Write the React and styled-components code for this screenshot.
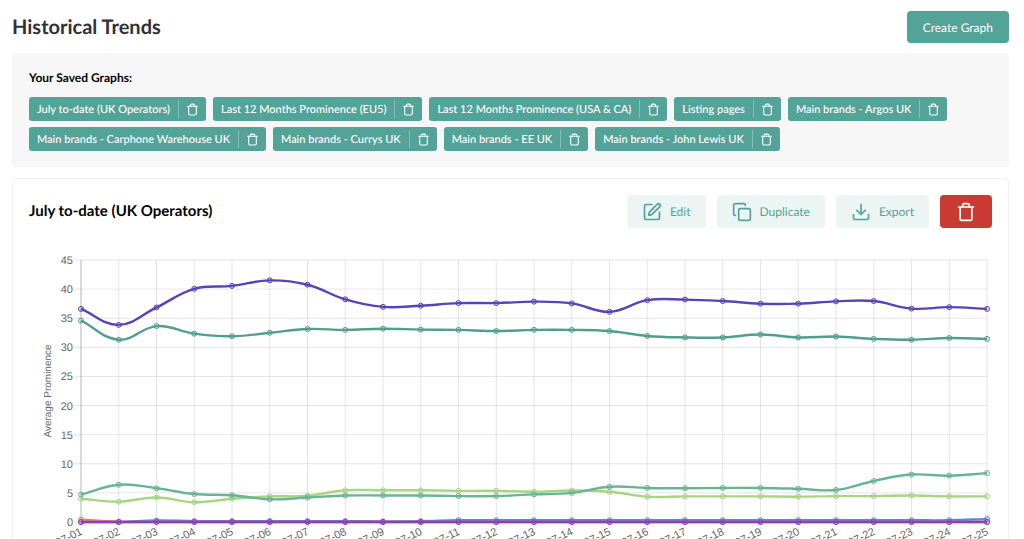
import React from 'react'
import styled, { createGlobalStyle } from 'styled-components'
import { Copy, Download, SquarePen, Trash } from 'lucide-react'

const GlobalStyle = createGlobalStyle`
  * {
    box-sizing: border-box;
  }
  body {
    margin: 0;
    background-color: #ffffff;
    font-family: Lato, "Liberation Sans", sans-serif;
    color: #000000;
    text-rendering: geometricPrecision;
  }
  button {
    font-family: inherit;
    text-rendering: inherit;
    border: none;
    cursor: pointer;
  }
`

const Page = styled.main`
  display: flex;
  flex-direction: column;
  padding: 11px 15px 16px 12px;
`

const Header = styled.header`
  display: flex;
  align-items: center;
  justify-content: space-between;
  margin-bottom: 10px;
`

const Title = styled.h1`
  margin: 0;
  font-size: 20px;
  line-height: 32px;
  font-weight: 700;
  color: #2f3237;
`

const CreateButton = styled.button`
  height: 32px;
  padding: 0 16px;
  border-radius: 4px;
  background-color: #53a398;
  color: #ffffff;
  font-size: 12px;
`

const SavedPanel = styled.section`
  margin-bottom: 11px;
  padding: 16px 17px;
  border-radius: 4px;
  background-color: #f7f7f7;
`

const SavedTitle = styled.h2`
  margin: 0 0 10px;
  font-size: 12px;
  line-height: 18px;
  font-weight: 700;
`

const ChipList = styled.ul`
  display: flex;
  flex-wrap: wrap;
  gap: 6px 7px;
  margin: 0;
  padding: 0;
  list-style: none;
`

const Chip = styled.li`
  display: flex;
  align-items: center;
  height: 24px;
  border-radius: 3px;
  background-color: #53a398;
`

const ChipLabel = styled.button`
  height: 24px;
  padding: 0 8px;
  background: none;
  color: #ffffff;
  font-size: 11px;
  font-weight: 500;
`

const ChipDelete = styled.button`
  display: flex;
  align-items: center;
  height: 18px;
  padding: 0 7px;
  border-left: 1px solid #86beb6;
  background: none;
  color: #ffffff;
`

const Card = styled.section`
  padding: 16px;
  border: 1px solid #f1f1f1;
  border-radius: 4px;
`

const CardHeader = styled.div`
  display: flex;
  align-items: center;
  justify-content: space-between;
  margin-bottom: 15px;
`

const CardTitle = styled.h2`
  margin: 0;
  font-size: 15px;
  line-height: 33px;
  font-weight: 700;
`

const Actions = styled.div`
  display: flex;
  gap: 11px;
`

const ActionButton = styled.button`
  display: flex;
  align-items: center;
  gap: 8px;
  height: 33px;
  padding: 0 ${({ $danger }) => ($danger ? '16px' : '15px')};
  border-radius: 4px;
  background-color: ${({ $danger }) => ($danger ? '#c93a32' : '#ecf5f4')};
  color: ${({ $danger }) => ($danger ? '#ffffff' : '#53a398')};
  font-size: 12px;
`

const ChartSvg = styled.svg`
  display: block;
  width: 100%;
  height: auto;
  font-family: "Liberation Sans", Arial, sans-serif;
  font-size: 11px;
  fill: #666666;
`

const savedGraphs = [
  'July to-date (UK Operators)',
  'Last 12 Months Prominence (EU5)',
  'Last 12 Months Prominence (USA & CA)',
  'Listing pages',
  'Main brands - Argos UK',
  'Main brands - Carphone Warehouse UK',
  'Main brands - Currys UK',
  'Main brands - EE UK',
  'Main brands - John Lewis UK',
]

const days = Array.from({ length: 25 }, (_, i) => `07-${String(i + 1).padStart(2, '0')}`)
const ticks = [0, 5, 10, 15, 20, 25, 30, 35, 40, 45]

// painted in order, the last one is on top
const series = [
  { color: '#4a90d9', values: [0, 0, 0.25, 0.15, 0.15, 0.15, 0.15, 0.15, 0.1, 0.15, 0.3, 0.3, 0.3, 0.3, 0.3, 0.3, 0.3, 0.3, 0.3, 0.3, 0.3, 0.3, 0.3, 0.3, 0.5] },
  { color: '#e5825f', values: [0.4, 0.05, ...Array(23).fill(0)] },
  { color: '#a8d582', values: [4, 3.5, 4.2, 3.4, 4, 4.4, 4.5, 5.45, 5.45, 5.45, 5.35, 5.35, 5.2, 5.4, 5.2, 4.35, 4.4, 4.4, 4.4, 4.35, 4.45, 4.45, 4.55, 4.4, 4.4] },
  { color: '#68b596', values: [4.7, 6.4, 5.8, 4.8, 4.6, 3.9, 4.2, 4.55, 4.55, 4.55, 4.45, 4.45, 4.75, 5, 6.05, 5.85, 5.8, 5.85, 5.85, 5.7, 5.5, 7.05, 8.15, 7.95, 8.4] },
  { color: '#4f9f8f', values: [34.6, 31.3, 33.65, 32.35, 31.9, 32.5, 33.15, 33, 33.2, 33.05, 33, 32.8, 33, 33, 32.8, 31.95, 31.7, 31.7, 32.2, 31.7, 31.85, 31.45, 31.3, 31.6, 31.45] },
  { color: '#5844b8', values: [36.6, 33.85, 36.85, 40.05, 40.55, 41.5, 40.75, 38.25, 36.95, 37.15, 37.6, 37.6, 37.85, 37.55, 36.1, 38.1, 38.2, 37.95, 37.5, 37.5, 37.9, 37.95, 36.65, 36.9, 36.6] },
  { color: '#8a3fbe', values: Array(25).fill(0) },
]

const plot = { left: 52, right: 958, top: 17, bottom: 279 }
const xAt = (i) => plot.left + (i * (plot.right - plot.left)) / (days.length - 1)
const yAt = (value) => plot.bottom - (value * (plot.bottom - plot.top)) / 45

const controlPoints = (prev, point, next) => {
  const before = Math.hypot(point.x - prev.x, point.y - prev.y)
  const after = Math.hypot(next.x - point.x, next.y - point.y)
  const total = before + after || 1
  const a = (0.4 * before) / total
  const b = (0.4 * after) / total
  const dx = next.x - prev.x
  const dy = next.y - prev.y
  return [
    { x: point.x - a * dx, y: point.y - a * dy },
    { x: point.x + b * dx, y: point.y + b * dy },
  ]
}

const curve = (points) => {
  const controls = points.map((point, i) =>
    controlPoints(points[i - 1] || point, point, points[i + 1] || point))
  return points.map((point, i) => {
    if (i === 0) return `M${point.x} ${point.y}`
    const from = controls[i - 1][1]
    const to = controls[i][0]
    return `C${from.x} ${from.y} ${to.x} ${to.y} ${point.x} ${point.y}`
  }).join(' ')
}

const Line = ({ color, values }) => {
  const points = values.map((value, i) => ({ x: xAt(i), y: yAt(value) }))
  return <g stroke={color} fill="none">
    <path d={curve(points)} strokeWidth="2.4" />
    {points.map(({ x, y }) => (
      <circle key={x} cx={x} cy={y} r="2.5" fill={color} fillOpacity="0.15" />
    ))}
  </g>
}

const TrendChart = () => {
  return <ChartSvg viewBox="0 0 963 310" role="img" aria-label="Average Prominence by day">
    <g stroke="#000000" strokeOpacity="0.1">
      {ticks.map((tick) => (
        <line key={tick} x1={plot.left - 7} x2={plot.right} y1={yAt(tick)} y2={yAt(tick)} />
      ))}
      {days.map((day, i) => (
        <line key={day} x1={xAt(i)} x2={xAt(i)} y1={plot.top} y2={plot.bottom + 7} />
      ))}
      <path d={`M${plot.left} ${plot.top}V${plot.bottom}H${plot.right}`} fill="none" strokeOpacity="0.2" />
    </g>
    {ticks.map((tick) => (
      <text key={tick} x={plot.left - 8} y={yAt(tick) + 4} textAnchor="end">{tick}</text>
    ))}
    {days.map((day, i) => (
      <text key={day} transform={`translate(${xAt(i) + 2} ${plot.bottom + 12}) rotate(-26)`} textAnchor="end">{day}</text>
    ))}
    <text transform="translate(22 148) rotate(-90)" textAnchor="middle" fontSize="10">Average Prominence</text>
    {series.map((item) => (
      <Line key={item.color} {...item} />
    ))}
  </ChartSvg>
}

const SavedGraph = ({ name }) => {
  return <Chip>
    <ChipLabel type="button">{name}</ChipLabel>
    <ChipDelete type="button" aria-label={`Delete ${name}`}>
      <Trash size={13} strokeWidth={2} />
    </ChipDelete>
  </Chip>
}

const App = () => {
  return <>
    <GlobalStyle />
    <Page>
      <Header>
        <Title>Historical Trends</Title>
        <CreateButton type="button">Create Graph</CreateButton>
      </Header>
      <SavedPanel>
        <SavedTitle>Your Saved Graphs:</SavedTitle>
        <ChipList>
          {savedGraphs.map((name) => (
            <SavedGraph key={name} name={name} />
          ))}
        </ChipList>
      </SavedPanel>
      <Card>
        <CardHeader>
          <CardTitle>July to-date (UK Operators)</CardTitle>
          <Actions>
            <ActionButton type="button"><SquarePen size={20} />Edit</ActionButton>
            <ActionButton type="button"><Copy size={20} />Duplicate</ActionButton>
            <ActionButton type="button"><Download size={20} />Export</ActionButton>
            <ActionButton type="button" $danger aria-label="Delete graph"><Trash size={20} /></ActionButton>
          </Actions>
        </CardHeader>
        <TrendChart />
      </Card>
    </Page>
  </>
}

export default App
